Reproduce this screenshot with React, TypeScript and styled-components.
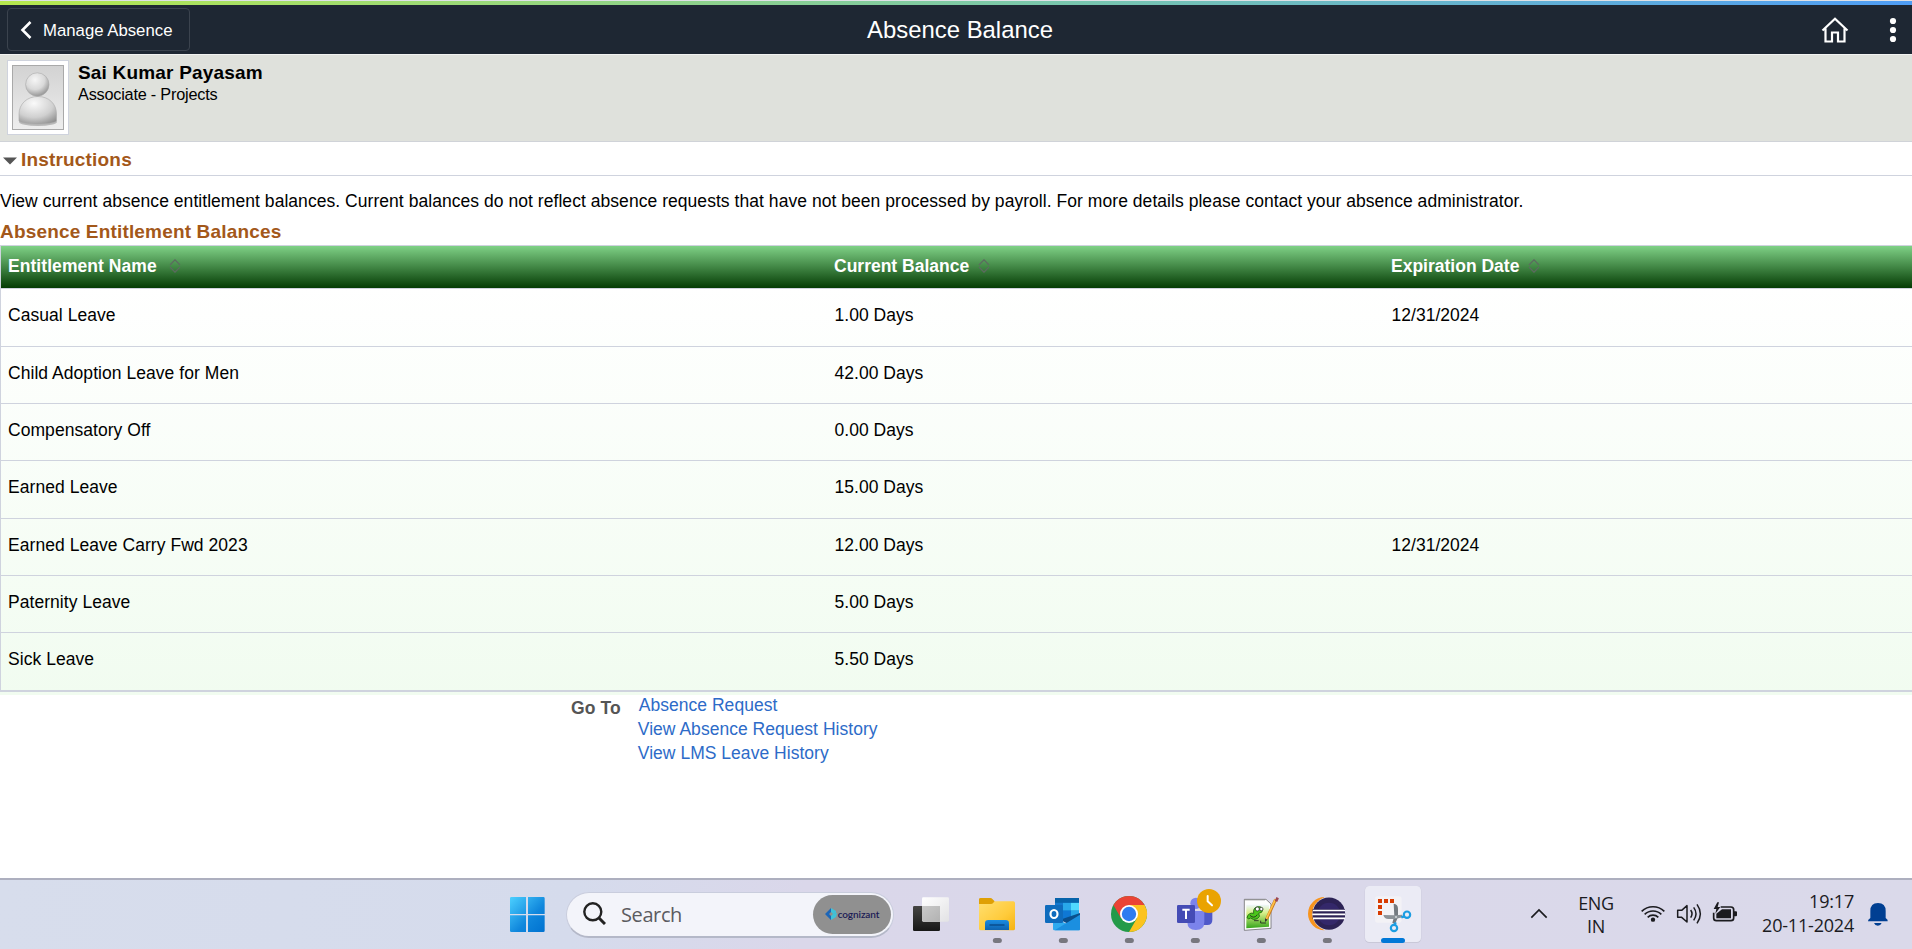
import React from "react";
import styled, { createGlobalStyle } from "styled-components";

const Global = createGlobalStyle`
  body { margin: 0; background: #fff; }
  * { box-sizing: border-box; }
`;

const Page = styled.div`
  width: 1912px;
  height: 949px;
  display: flex;
  flex-direction: column;
  overflow: hidden;
  background: #fff;
  font-family: "Liberation Sans", Arial, sans-serif;
  font-size: 17.5px;
  color: #000;
  white-space: nowrap;
`;

const Accent = styled.div`
  height: 5px;
  flex: none;
  border-top: 1px solid #dfe1e6;
  background: linear-gradient(90deg, #b6e84e 0%, #78c6ae 56%, #4f9df5 100%);
`;

const Banner = styled.header`
  flex: none;
  height: 49px;
  display: grid;
  grid-template-columns: 1fr auto 1fr;
  align-items: center;
  background: #1e2733;
  color: #fff;
`;

const BackButton = styled.button`
  justify-self: start;
  width: 183px;
  height: 43px;
  margin-left: 7px;
  padding: 0 0 0 12px;
  display: flex;
  align-items: center;
  gap: 10px;
  border: 1px solid #3b434e;
  border-radius: 4px;
  background: transparent;
  color: #fff;
  font: 16.75px "Liberation Sans", Arial, sans-serif;
`;

const BackLabel = styled.span`
  padding-top: 2px;
`;

const Title = styled.h1`
  margin: 0;
  padding-left: 8px;
  font-size: 23.9px;
  font-weight: 400;
  line-height: 30px;
`;

const BannerActions = styled.div`
  justify-self: end;
  display: flex;
  align-items: center;
  gap: 40px;
  padding-right: 15px;
`;

const Profile = styled.section`
  flex: none;
  height: 88px;
  display: flex;
  gap: 9px;
  padding: 5px 7px;
  border-top: 1px solid #f2f3f1;
  border-bottom: 1px solid #d0d3d8;
  background: #dfe1dc;
`;

const Photo = styled.div`
  width: 62px;
  height: 75px;
  padding: 4px;
  border: 1px solid #cfd3dd;
  background: #fff;
`;

const Person = styled.div`
  display: flex;
  flex-direction: column;
`;

const PersonName = styled.strong`
  padding-top: 1px;
  font-size: 19px;
  line-height: 24px;
  letter-spacing: 0.19px;
`;

const PersonRole = styled.span`
  margin-top: -1px;
  font-size: 16.25px;
  line-height: 21px;
  letter-spacing: -0.21px;
`;

const Instructions = styled.h2`
  flex: none;
  height: 34px;
  margin: 0;
  padding: 3px 0 0 3px;
  display: flex;
  align-items: center;
  gap: 4px;
  border-bottom: 1px solid #cfd3de;
  color: #a3581a;
  font-size: 19px;
  letter-spacing: 0.18px;
`;

const Caret = styled.svg`
  margin-top: 2px;
`;

const Note = styled.p`
  flex: none;
  margin: 14px 0 0;
  line-height: 22px;
  letter-spacing: 0.047px;
`;

const SectionTitle = styled.h2`
  flex: none;
  margin: 8px 0 1px;
  color: #a3581a;
  font-size: 19px;
  line-height: 24px;
  letter-spacing: 0.17px;
`;

const Table = styled.div`
  flex: none;
  border-top: 1px solid #cfd3de;
  height: 450px;
  background: linear-gradient(180deg, #ffffff 40px, #f1fcf0 450px);
`;

const columns = `grid-template-columns: 826px 557px 1fr;`;

const HeadRow = styled.div`
  display: grid;
  ${columns}
  align-items: center;
  height: 43px;
  padding-bottom: 1px;
  border-left: 1px solid #cfd3de;
  border-bottom: 1px solid #cfd3de;
  background: linear-gradient(180deg, #7fd186 0%, #043c04 100%);
  color: #fff;
  font-weight: 700;
`;

const HeadCell = styled.div<{ $gap?: number }>`
  display: flex;
  align-items: center;
  gap: ${(p) => p.$gap ?? 9}px;
  padding-left: 7px;
  letter-spacing: ${(p) => (p.$gap ? 0.06 : 0)}px;
`;

const SortMark = styled.svg`
  margin-top: -2px;
`;

const Row = styled.div<{ $last?: boolean; $tall?: boolean }>`
  display: grid;
  ${columns}
  align-items: center;
  height: ${(p) => (p.$last ? 59 : p.$tall ? 58 : 57)}px;
  padding-bottom: ${(p) => (p.$tall || p.$last ? 4 : 3)}px;
  border-left: 1px solid #cfd3de;
  border-bottom: ${(p) => (p.$last ? 2 : 1)}px solid #cfd3de;
  letter-spacing: 0.03px;
`;

const Cell = styled.div`
  padding-left: 7.5px;
  &:first-child { padding-left: 7px; letter-spacing: 0.05px; }
`;

const GoTo = styled.section`
  display: flex;
  gap: 17px;
  padding: 0 0 0 571px;
`;

const GoToLabel = styled.strong`
  color: #555;
  line-height: 24px;
  padding-top: 1px;
  letter-spacing: 0.1px;
`;

const Links = styled.nav`
  display: flex;
  flex-direction: column;
  letter-spacing: 0.03px;
`;

const Link = styled.a`
  color: #2d6bc8;
  line-height: 24px;
  &:first-child { padding-left: 1px; margin-top: -2px; }
`;

const Taskbar = styled.footer`
  flex: none;
  margin-top: auto;
  height: 71px;
  display: flex;
  border-top: 2px solid #adafbf;
  padding-left: 494px;
  background: linear-gradient(95deg, #d7ddec 0%, #d5dbec 30%, #dad7ea 42%, #dad9ea 100%);
  color: #1b1b1f;
`;

const AppIcon = styled.svg`
  flex: none;
  width: 66px;
  height: 69px;
`;

const SearchBox = styled.div`
  width: 328px;
  height: 46px;
  margin: 12px 4px 0 6px;
  padding: 0 2px 2px 16px;
  display: flex;
  align-items: center;
  border: 1px solid #c9cddd;
  border-bottom: 2px solid #b4b8c8;
  border-radius: 23px;
  background: #f3f4fa;
`;

const SearchText = styled.span`
  margin-left: 15px;
  padding-top: 1px;
  color: #5b5b60;
  font-family: "Open Sans", "Noto Sans", sans-serif;
  font-size: 20px;
  letter-spacing: -0.4px;
`;

const Sponsor = styled.div`
  margin: 1px 0 0 auto;
  width: 78px;
  height: 39px;
  border-radius: 20px;
  background: #909090;
  display: flex;
  align-items: center;
  justify-content: center;
  gap: 1px;
  color: #1b1a55;
  font: 600 10px Lato, "Open Sans", sans-serif;
  letter-spacing: -0.1px;
`;

const Tray = styled.div`
  margin-left: auto;
  display: flex;
`;

const TrayText = styled.div<{ $align: string; $width: number; $spacing?: number; $line?: number; $top: number }>`
  width: ${(p) => p.$width}px;
  padding-top: ${(p) => p.$top}px;
  text-align: ${(p) => p.$align};
  font-family: "Open Sans", "Noto Sans", sans-serif;
  font-size: 18px;
  line-height: ${(p) => p.$line ?? 24}px;
  letter-spacing: ${(p) => p.$spacing ?? 0}px;
`;

const TrayIcon = styled.svg<{ $width: number }>`
  flex: none;
  width: ${(p) => p.$width}px;
  height: 69px;
`;

const Sort = () => (
  <SortMark width="12" height="14" viewBox="0 0 12 14" fill="none" stroke="#5d6a60" strokeWidth="1.2">
    <path d="M1 6 6 .8 11 6M1 8 6 13.2 11 8" />
  </SortMark>
);

const Avatar = () => (
  <svg width="52" height="65" viewBox="0 0 52 65" display="block">
    <defs>
      <linearGradient id="wall" x2="0" y2="1"><stop stopColor="#d2d2d2" /><stop offset="1" stopColor="#eeeeee" /></linearGradient>
      <radialGradient id="skin" cx=".4" cy=".3" r=".75"><stop stopColor="#f6f6f6" /><stop offset=".55" stopColor="#d9d9d9" /><stop offset="1" stopColor="#8d8d8d" /></radialGradient>
      <radialGradient id="torso" cx=".4" cy=".25" r=".85"><stop stopColor="#fafafa" /><stop offset=".6" stopColor="#d0d0d0" /><stop offset="1" stopColor="#8f8f8f" /></radialGradient>
    </defs>
    <rect x=".5" y=".5" width="51" height="64" fill="url(#wall)" stroke="#a9a9a9" />
    <ellipse cx="26" cy="57" rx="19" ry="4" fill="#b9b9b9" />
    <path d="M7 56V49C7 39 15 31.500 26 31.500S44.500 39 44.500 49v7C40 60 12 60 7 56Z" fill="url(#torso)" stroke="#aaa" strokeWidth=".6" />
    <circle cx="25.300" cy="19.500" r="11.700" fill="url(#skin)" stroke="#aaa" strokeWidth=".6" />
  </svg>
);

const Running = ({ x }: { x: number }) => <rect x={x - 13.5} y="204" width="27" height="15" rx="7.500" fill="#77777f" />;

const StartIcon = () => (
  <AppIcon viewBox="42 30 198 207">
    <defs><linearGradient id="win" gradientUnits="userSpaceOnUse" x1="90" y1="81" x2="194" y2="186"><stop stopColor="#4cd0ff" /><stop offset=".6" stopColor="#0f86dc" /><stop offset="1" stopColor="#0072d0" /></linearGradient></defs>
    <path d="M94 81h44v51H90V85q0-4 4-4ZM144 81h46q4 0 4 4v47h-50ZM90 136h48v50H94q-4 0-4-4ZM144 136h50v46q0 4-4 4h-46Z" fill="url(#win)" />
  </AppIcon>
);

const TaskViewIcon = () => (
  <AppIcon viewBox="1254 30 198 207">
    <defs>
      <linearGradient id="dark" x2="0" y2="1"><stop stopColor="#454543" /><stop offset="1" stopColor="#171717" /></linearGradient>
      <linearGradient id="light" x2="1" y2="1"><stop stopColor="#fff" /><stop offset="1" stopColor="#e2e2e4" /></linearGradient>
      <linearGradient id="overlap" x2="1" y2="1"><stop stopColor="#c9c9c9" /><stop offset="1" stopColor="#b2b2b2" /></linearGradient>
    </defs>
    <rect x="1299" y="108" width="81" height="75" rx="4" fill="url(#dark)" />
    <rect x="1326" y="82" width="81" height="73" rx="4" fill="url(#light)" />
    <path d="M1326 108h54v46h-50q-4 0-4-4Z" fill="url(#overlap)" />
  </AppIcon>
);

const FolderIcon = () => (
  <AppIcon viewBox="42 30 198 207">
    <defs>
      <linearGradient id="folder" x2="1" y2="1"><stop stopColor="#ffdf70" /><stop offset=".6" stopColor="#ffcb3b" /><stop offset="1" stopColor="#f5b211" /></linearGradient>
      <linearGradient id="tray" x2="0" y2="1"><stop stopColor="#1b8ce2" /><stop offset="1" stopColor="#0f63b0" /></linearGradient>
    </defs>
    <path d="M87 88q0-4 5-4h29q4 0 6 3l7 7v12H87Z" fill="#dfa005" />
    <path d="M87 102h36q4 0 7-4l4-4h56q5 0 5 5v77q0 5-5 5H92q-5 0-5-5Z" fill="url(#folder)" />
    <path d="M105 180v-20q0-10 10-10h52q10 0 10 10v20Z" fill="url(#tray)" />
    <path d="M120 165h42" stroke="#0a4d8e" strokeWidth="4" strokeLinecap="round" />
    <Running x={142} />
  </AppIcon>
);

const OutlookIcon = () => (
  <AppIcon viewBox="240 30 198 207">
    <path d="M315 88q0-4 4-4h64q4 0 4 4v60h-72Z" fill="#0f6cbd" />
    <path d="M315 98h24v24h-24Z" fill="#1378cf" /><path d="M339 98h24v24h-24Z" fill="#28a8ea" /><path d="M363 98h24v24h-24Z" fill="#50d9ff" />
    <path d="M339 122h24v26h-24Z" fill="#0f78d4" /><path d="M363 122h24v26h-24Z" fill="#28a8ea" />
    <path d="M315 84h72v14h-72Z" fill="#0763aa" />
    <path d="M390 129v50l-60-30Z" fill="#0a4f8c" /><path d="M309 142l81 39H313q-4 0-4-4Z" fill="#2eaaf0" />
    <path d="M390 134v43q0 4-4 4h-72Z" fill="#1b8fe0" />
    <rect x="285" y="105" width="54" height="54" rx="4" fill="#0f6cbd" />
    <ellipse cx="312" cy="132" rx="10.500" ry="12" fill="none" stroke="#fff" strokeWidth="6.500" />
    <Running x={340} />
  </AppIcon>
);

const ChromeIcon = () => (
  <AppIcon viewBox="438 30 198 207">
    <circle cx="537" cy="132" r="54" fill="#249a49" />
    <path d="M490.200 105A54 54 0 0 1 583.800 105H537L513.600 145.500Z" fill="#ea4335" />
    <path d="M583.800 105A54 54 0 0 1 537 186L560.400 145.500 537 105Z" fill="#fcc31e" />
    <circle cx="537" cy="132" r="27" fill="#fff" />
    <circle cx="537" cy="132" r="21.500" fill="#2f7cf0" />
    <Running x={538} />
  </AppIcon>
);

const TeamsIcon = () => (
  <AppIcon viewBox="636 30 198 207">
    <circle cx="738" cy="100" r="17" fill="#7b83eb" />
    <path d="M757 123h30v27q0 15-15 15h-15Z" fill="#5059c9" />
    <path d="M712 123h51v33q0 24-25.500 24T712 156Z" fill="#7b83eb" />
    <rect x="681" y="105" width="54" height="54" rx="4" fill="#444bb5" />
    <path d="M697 119h22M708 119v28" stroke="#fff" strokeWidth="6" />
    <circle cx="777" cy="93" r="36" fill="#eaa300" />
    <path d="M773 78v16l13 12" fill="none" stroke="#fff" strokeWidth="6" strokeLinecap="round" strokeLinejoin="round" />
    <Running x={736} />
  </AppIcon>
);

const NotepadIcon = () => (
  <AppIcon viewBox="834 30 198 207">
    <defs><linearGradient id="grass" x2="0" y2="1"><stop stopColor="#eef6ff" /><stop offset=".35" stopColor="#d8f089" /><stop offset="1" stopColor="#35a51b" /></linearGradient></defs>
    <path d="M883 88h65l15 14v73l-80 6Z" fill="#fdfdfd" stroke="#555" strokeWidth="2" />
    <path d="M887 90h56" stroke="#777" strokeWidth="5" strokeDasharray="2 4" />
    <path d="M889 104h68v66l-68 5Z" fill="url(#grass)" />
    <path d="M891 143q5-17 20-13-2-16 9-19 16-4 18 8 0 10-12 11 7 10-4 16-12 6-20-2-6 6-11-1Z" fill="#4cc51b" stroke="#1e6412" strokeWidth="2.500" />
    <circle cx="922" cy="117" r="6" fill="#fff" stroke="#222" strokeWidth="2" /><circle cx="934" cy="117" r="5" fill="#fff" stroke="#222" strokeWidth="2" />
    <path d="M900 136q12 12 22-2M912 152h14M932 152v7h16" stroke="#222" strokeWidth="2.500" fill="none" />
    <path d="M977 88 950 147" stroke="#c77a20" strokeWidth="9" /><path d="M976 88 949 147" stroke="#ffc247" strokeWidth="5" />
    <path d="M983 83 978 94" stroke="#9b4853" strokeWidth="8" /><path d="m945 145 8 4-8 7Z" fill="#333" />
    <Running x={934} />
  </AppIcon>
);

const EclipseIcon = () => (
  <AppIcon viewBox="1032 30 198 207">
    <path d="M1124 81a50 50 0 0 0 0 100q-26-15-26-50t26-50Z" fill="#f7941e" />
    <circle cx="1137" cy="131" r="50" fill="#dad9ea" />
    <circle cx="1137" cy="131" r="48.500" fill="#2c2255" />
    <circle cx="1137" cy="132" r="34" fill="#40318a" opacity=".4" />
    <path d="M1088 117h97v30h-97Z" fill="#2c2255" />
    <path d="M1089 121.500h96M1087 133h98M1089 145h96" stroke="#fff" strokeWidth="5" />
    <Running x={1132} />
  </AppIcon>
);

const SnipIcon = () => (
  <AppIcon viewBox="1230 30 198 207">
    <rect x="1244" y="48" width="170" height="171" rx="14" fill="#c9c8d8" />
    <rect x="1245" y="48" width="168" height="168" rx="13" fill="#ebebf5" />
    <rect x="1275" y="79" width="80" height="79" rx="8" fill="#f3f2f6" />
    <path d="M1284 87h12v12h-12ZM1302 87h12v12h-12ZM1320 87h12v12h-12ZM1284 105h12v12h-12ZM1284 123h12v12h-12Z" fill="#d83b01" />
    <path d="M1331 101q13 2 13 15v25l-9 22-8-5 6-20Z" fill="#747a80" />
    <path d="M1300 135q3 12 15 12h20l23-5-2-8-21 2Z" fill="#8d9399" />
    <circle cx="1338" cy="141" r="3" fill="#d5d8db" />
    <circle cx="1371" cy="134" r="9.500" fill="none" stroke="#1b9de2" strokeWidth="6.500" />
    <circle cx="1332" cy="174" r="9.500" fill="none" stroke="#1b9de2" strokeWidth="6.500" />
    <path d="m1354 142 9-3M1334 165l3-8" stroke="#1b9de2" strokeWidth="7" />
    <rect x="1293" y="204" width="72" height="15" rx="7.500" fill="#0078d7" />
  </AppIcon>
);

const leave = [
  ["Casual Leave", "1.00 Days", "12/31/2024"],
  ["Child Adoption Leave for Men", "42.00 Days", ""],
  ["Compensatory Off", "0.00 Days", ""],
  ["Earned Leave", "15.00 Days", ""],
  ["Earned Leave Carry Fwd 2023", "12.00 Days", "12/31/2024"],
  ["Paternity Leave", "5.00 Days", ""],
  ["Sick Leave", "5.50 Days", ""],
];

export default function App() {
  return (
    <Page>
      <Global />
      <Accent />
      <Banner>
        <BackButton>
          <svg width="13" height="18" viewBox="0 0 13 18" fill="none" stroke="#fff" strokeWidth="2.600"><path d="M10.500 1 2.500 9l8 8" /></svg>
          <BackLabel>Manage Absence</BackLabel>
        </BackButton>
        <Title>Absence Balance</Title>
        <BannerActions>
          <svg width="28" height="26" viewBox="0 0 28 26" fill="none" stroke="#fff" strokeWidth="2.200">
            <path d="M1.500 13.500 14 1.800 26.500 13.500M4.500 11.500V24.500H11V15.500h6v9h6.500v-13" />
          </svg>
          <svg width="8" height="26" viewBox="0 0 8 26" fill="#fff"><circle cx="4" cy="4" r="3.100" /><circle cx="4" cy="13" r="3.100" /><circle cx="4" cy="22" r="3.100" /></svg>
        </BannerActions>
      </Banner>
      <Profile>
        <Photo><Avatar /></Photo>
        <Person>
          <PersonName>Sai Kumar Payasam</PersonName>
          <PersonRole>Associate - Projects</PersonRole>
        </Person>
      </Profile>
      <Instructions>
        <Caret width="14" height="8" viewBox="0 0 14 8"><path d="M0 .5h14L7 7.500Z" fill="#555" /></Caret>
        Instructions
      </Instructions>
      <Note>View current absence entitlement balances. Current balances do not reflect absence requests that have not been processed by payroll. For more details please contact your absence administrator.</Note>
      <SectionTitle>Absence Entitlement Balances</SectionTitle>
      <Table>
        <HeadRow>
          <HeadCell $gap={12}>Entitlement Name<Sort /></HeadCell>
          <HeadCell>Current Balance<Sort /></HeadCell>
          <HeadCell>Expiration Date<Sort /></HeadCell>
        </HeadRow>
        {leave.map(([name, balance, expires], i) => (
          <Row key={name} $last={i === 6} $tall={i === 0 || i === 3}>
            <Cell>{name}</Cell>
            <Cell>{balance}</Cell>
            <Cell>{expires}</Cell>
          </Row>
        ))}
      </Table>
      <GoTo>
        <GoToLabel>Go To</GoToLabel>
        <Links>
          <Link>Absence Request</Link>
          <Link>View Absence Request History</Link>
          <Link>View LMS Leave History</Link>
        </Links>
      </GoTo>
      <Taskbar>
        <StartIcon />
        <SearchBox>
          <svg width="23" height="23" viewBox="0 0 23 23" fill="none" stroke="#222" strokeWidth="2.400"><circle cx="9.800" cy="9.800" r="8.500" /><path d="m16 16 6 6" strokeWidth="3" /></svg>
          <SearchText>Search</SearchText>
          <Sponsor>
            <svg width="12" height="12" viewBox="0 0 12 12"><path d="M6 0 0 6l6 6V8L4 6l2-2Z" fill="#1d66b8" /><path d="M6 0v4l2 2 3-1V3ZM6 12V8l2-2 4-1-1 4Z" fill="#3fc1d8" /></svg>
            cognizant
          </Sponsor>
        </SearchBox>
        <TaskViewIcon />
        <FolderIcon />
        <OutlookIcon />
        <ChromeIcon />
        <TeamsIcon />
        <NotepadIcon />
        <EclipseIcon />
        <SnipIcon />
        <Tray>
          <TrayIcon $width={50} viewBox="42 30 150 207" fill="none" stroke="#1b1b1f" strokeWidth="5"><path d="m94 143 23-23 23 23" /></TrayIcon>
          <TrayText $align="center" $width={64} $spacing={-0.4} $line={23} $top={12}>ENG<br />IN</TrayText>
          <TrayIcon $width={114} viewBox="384 30 342 207" fill="none" stroke="#1b1b1f" strokeWidth="5">
            <path d="M425 124a49 49 0 0 1 68 0M434 133a36 36 0 0 1 50 0M443 142a23 23 0 0 1 32 0" />
            <circle cx="459" cy="149" r="6.500" fill="#1b1b1f" stroke="none" />
            <path d="M533 121h12l16-14v49l-16-14h-12Z" strokeLinejoin="round" strokeWidth="4.500" />
            <path d="M572 120q8 11 0 23M581 112q14 19 0 39M591 103q20 28 0 57" strokeWidth="4.500" />
            <path d="M662 111h31q8 0 8 8v25q0 8-8 8h-44q-8 0-8-8v-16" />
            <path d="M666 118h27v27h-44v-14Z" fill="#1b1b1f" stroke="none" />
            <path d="M702 124h6q3 0 3 3v9q0 3-3 3h-6ZM652 97l-11 20h8l-3 14 15-20h-8l4-14Z" fill="#1b1b1f" stroke="none" />
          </TrayIcon>
          <TrayText $align="right" $width={112} $spacing={-0.2} $top={9}>19:17<br />20-11-2024</TrayText>
          <TrayIcon $width={58} viewBox="1062 30 174 207">
            <path d="M1104 154q-1-5 7-10v-21q0-24 23-24t23 24v21q8 5 6 10ZM1122 159h23q-3 8-11.500 8t-11.500-8Z" fill="#003f92" />
          </TrayIcon>
        </Tray>
      </Taskbar>
    </Page>
  );
}
